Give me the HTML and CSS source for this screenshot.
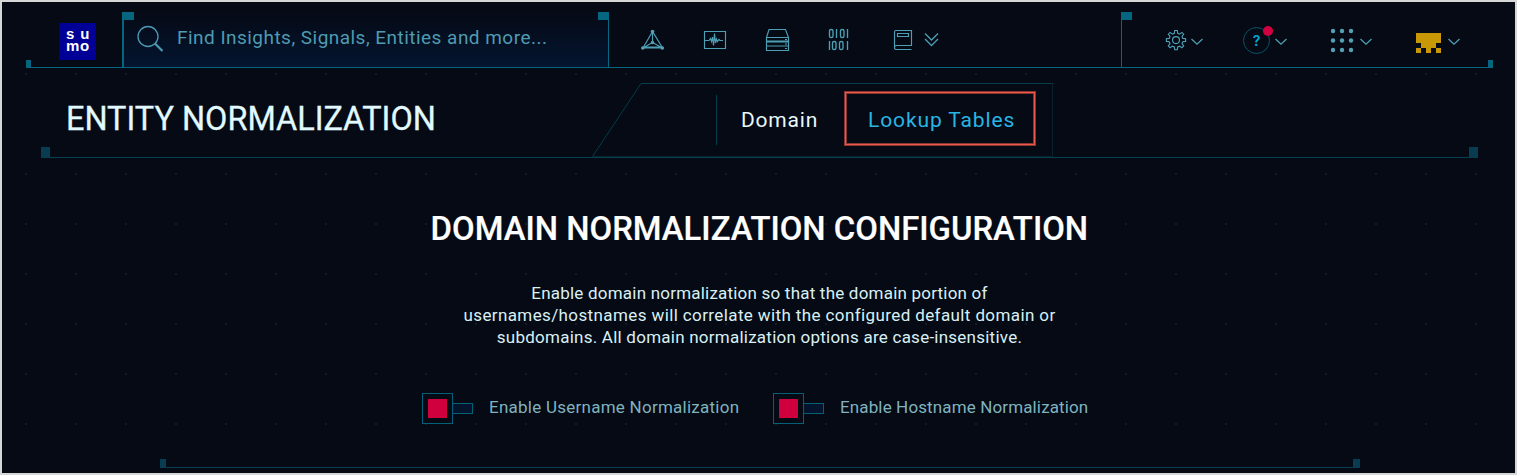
FILE: index.html
```html
<!DOCTYPE html>
<html lang="en">
<head>
<meta charset="utf-8">
<title>Entity Normalization</title>
<link rel="stylesheet" href="styles.css">
</head>
<body>
<div class="app">
  <header class="topbar">
    <div class="logo"><span class="logo-su">su</span><span class="logo-mo">mo</span></div>
    <div class="search">
      <svg class="search-icon" width="28" height="28" viewBox="0 0 28 28"><circle cx="11" cy="11.500" r="10" /><path d="M18 18.500L25.500 26" stroke-width="2.200" /></svg>
      <span class="search-text">Find Insights, Signals, Entities and more...</span>
    </div>
    <nav class="nav">
      <svg class="icon i-graph" width="26" height="26" viewBox="0 0 26 26"><path d="M12.500 4.500L3 21H22.500ZM12.500 4.500V15.500L3 21M12.500 15.500L22.500 21M3 20H22.500" /><g class="solid"><circle cx="12.500" cy="4.500" r="1.800"/><circle cx="12.500" cy="15.500" r="1.700"/><circle cx="2.800" cy="21" r="1.800"/><circle cx="22.300" cy="21" r="1.800"/></g></svg>
      <svg class="icon i-pulse" width="24" height="26" viewBox="0 0 24 26"><path d="M1.500 4.500H22.500V21.500H1.500ZM2 13.500H6L7.500 11.500L8.500 14.500L9.500 10L10.500 18.500L11.500 6.500L12.500 16L13.500 12L14.500 14.500L16 12.500L17 13.500H20" /></svg>
      <svg class="icon i-server" width="25" height="26" viewBox="0 0 25 26"><path d="M1.500 10.500L4 2.500H20.500L23.500 10.500V23.500H1.500ZM1.500 10.500H23.500M1.500 15H23.500M1.500 19H23.500M1.500 14H23.500M20 12.500H22M20 17H22M20 21.500H22" /></svg>
      <svg class="icon i-binary" width="22" height="26" viewBox="0 0 22 26"><rect x="1.500" y="2.500" width="3.500" height="8" rx="1.600"/><rect x="12.500" y="2.500" width="3.500" height="8" rx="1.600"/><path d="M8.500 2V11M19.500 2V11M1.500 14V23M19.500 14V23"/><rect x="4.500" y="14.500" width="3.500" height="8" rx="1.600"/><rect x="11.500" y="14.500" width="3.500" height="8" rx="1.600"/></svg>
      <svg class="icon i-book" width="20" height="26" viewBox="0 0 20 26"><path d="M18.500 22.500H3Q1.500 22.500 1.500 20.500V5Q1.500 3.500 3 3.500H18.500V18.500H3.500Q1.500 18.500 1.500 20.500M4.500 6.500H15.500V9.500H4.500Z" /></svg>
      <svg class="icon i-more" width="15" height="26" viewBox="0 0 15 26"><path d="M1 6.500L7.500 13L14 6.500M1 12L7.500 18.500L14 12" /></svg>
    </nav>
    <div class="tools">
      <svg class="icon i-gear" width="24" height="26" viewBox="0 0 24 26"><path d="M10.300 6.300L10.700 3.500H13.300L13.700 6.300L15.600 7.100L17.900 5.400L19.700 7.200L18 9.500L18.800 11.400L21.600 11.800V14.400L18.800 14.800L18 16.700L19.700 19L17.900 20.800L15.600 19.100L13.700 19.900L13.300 22.700H10.700L10.300 19.900L8.400 19.100L6.100 20.800L4.300 19L6 16.700L5.200 14.800L2.400 14.400V11.800L5.200 11.400L6 9.500L4.300 7.200L6.100 5.400L8.400 7.100Z" /><circle cx="12" cy="13.100" r="3.500"/></svg>
      <svg class="icon chev c1" width="14" height="26" viewBox="0 0 14 26"><path d="M1.500 12L7 17.200L12.500 12" /></svg>
      <div class="help">?<span class="badge"></span></div>
      <svg class="icon chev c2" width="14" height="26" viewBox="0 0 14 26"><path d="M1.500 12L7 17.200L12.500 12" /></svg>
      <svg class="icon i-grid" width="26" height="26" viewBox="0 0 26 26"><g class="solid"><circle cx="4" cy="4" r="2.200"/><circle cx="13" cy="4" r="2.200"/><circle cx="22" cy="4" r="2.200"/><circle cx="4" cy="13.500" r="2.200"/><circle cx="13" cy="13.500" r="2.200"/><circle cx="22" cy="13.500" r="2.200"/><circle cx="4" cy="23" r="2.200"/><circle cx="13" cy="23" r="2.200"/><circle cx="22" cy="23" r="2.200"/></g></svg>
      <svg class="icon chev c3" width="14" height="26" viewBox="0 0 14 26"><path d="M1.500 12L7 17.200L12.500 12" /></svg>
      <svg class="avatar" width="25" height="26" viewBox="0 0 25 26"><path d="M0 6H25V16H20V21H25V26H20V21H15V26H10V21H5V26H0V21H5V16H0Z" /></svg>
      <svg class="icon chev c4" width="14" height="26" viewBox="0 0 14 26"><path d="M1.500 12L7 17.200L12.500 12" /></svg>
    </div>
  </header>

  <section class="titlebar">
    <h1 class="page-title"><span>ENTITY NORMALIZATION</span></h1>
    <div class="tabs">
      <svg class="tabs-frame" width="461" height="75" viewBox="0 0 461 75"><path class="edge" d="M0.500 73.500L49 0.500H461"/><path class="edge-dim" d="M460.500 1V73.500H0"/></svg>
      <a class="tab">Domain</a>
      <a class="tab tab-active">Lookup Tables</a>
    </div>
  </section>

  <main class="config">
    <h2 class="config-title">DOMAIN NORMALIZATION CONFIGURATION</h2>
    <p class="config-text"><span class="l1">Enable domain normalization so that the domain portion of</span><br><span class="l2">usernames/hostnames will correlate with the configured default domain or</span><br><span class="l3">subdomains. All domain normalization options are case-insensitive.</span></p>
    <div class="toggles">
      <label class="toggle"><span class="box"><i></i></span><span class="stub"></span><span class="label label-user">Enable Username Normalization</span></label>
      <label class="toggle"><span class="box"><i></i></span><span class="stub"></span><span class="label label-host">Enable Hostname Normalization</span></label>
    </div>
    <div class="panel-edge"></div>
  </main>
</div>
</body>
</html>
```
FILE: styles.css
```css
* { box-sizing: border-box; }
body { margin: 0; font-family: Roboto, "Liberation Sans", sans-serif; background: #050a14; }
.app {
  height: 475px;
  overflow: hidden;
  border: 2px solid #d5d6d6;
  background: conic-gradient(from 270deg at 2px 2px, #141b26 90deg, transparent 0) 23px 21px / 50px 50px #050a15;
}
.topbar {
  position: relative;
  display: flex;
  height: 66px;
  padding: 10px 24px 0 33px;
  margin: 0 22px 0 24px;
  background: #050a15;
  border-bottom: 1px solid #04667f;
  box-shadow: -24px 0 #050a15, 22px 0 #050a15;
}
.topbar::before, .topbar::after {
  content: "";
  position: absolute;
  bottom: -1px;
  width: 5px;
  height: 8px;
  background: #04667f;
}
.topbar::before { left: 0; }
.topbar::after { right: 0; }
.logo {
  display: flex;
  flex-direction: column;
  width: 37px;
  height: 37px;
  margin: 11px 26px 0 0;
  padding: 5px 0 0 7px;
  background: #000096;
  color: #fff;
  font: bold 15px/11.500px "Liberation Sans", sans-serif;
}
.logo-su { letter-spacing: 5.800px; }
.logo-mo { letter-spacing: 0.600px; }
.search {
  position: relative;
  display: flex;
  width: 487px;
  padding: 13px 0 0 13px;
  border-left: 2px solid #04667f;
  border-right: 1px solid #04667f;
  background: linear-gradient(#050a15, #041530);
}
.search::before, .search::after, .tools::before {
  content: "";
  position: absolute;
  top: 0;
  width: 11px;
  height: 8px;
  background: #04667f;
}
.search::before { left: -2px; width: 12px; }
.search::after { right: -1px; }
.search-icon { fill: none; stroke: #4b9ab1; stroke-width: 1.300; }
.search-text {
  margin-left: 12px;
  color: #4f9bb1;
  font-size: 19px;
  line-height: 26px;
  letter-spacing: 0.470px;
  white-space: nowrap;
}
.icon { flex: none; fill: none; stroke: #4d9fb4; stroke-width: 1.150; }
.icon .solid { fill: #55a0b5; stroke: none; }
.chev, .i-more { stroke-width: 1.300; }
.nav { display: flex; width: 512px; padding: 15px 0 0 31px; }
.i-pulse { margin-left: 37px; }
.i-server { margin-left: 38px; }
.i-binary { margin-left: 38px; stroke-width: 1.350; }
.i-book { margin-left: 43px; }
.i-more { margin-left: 11px; }
.tools {
  position: relative;
  display: flex;
  flex: 1;
  padding: 15px 0 0 41.500px;
  border-left: 1px solid #04667f;
}
.tools::before { left: -1px; }
.c1 { margin-left: 2.500px; }
.help {
  position: relative;
  width: 27px;
  height: 27px;
  margin-left: 39px;
  border: 1px solid #0a5266;
  border-radius: 50%;
  color: #00a9d6;
  font: 600 14px/26px Inter, sans-serif;
  text-align: center;
}
.badge {
  position: absolute;
  top: -2px;
  right: -4px;
  width: 10px;
  height: 10px;
  border-radius: 50%;
  background: #d20040;
}
.c2 { margin-left: 4px; }
.i-grid { margin-left: 41px; }
.c3 { margin-left: 4px; }
.avatar { flex: none; margin-left: 43px; fill: #c99806; }
.c4 { margin-left: 6px; }

.titlebar {
  position: relative;
  display: flex;
  height: 80px;
  margin: 10px 37px 0 39px;
  background: #050a15;
  border-bottom: 1px solid #063f50;
  box-shadow: -39px 0 #050a15, 37px 0 #050a15;
}
.titlebar::before, .titlebar::after {
  content: "";
  position: absolute;
  bottom: -1px;
  width: 9px;
  height: 11px;
  background: #083c50;
}
.titlebar::before { left: 0; }
.titlebar::after { right: 0; }
.page-title {
  width: 551px;
  margin: 0;
  padding: 20px 0 0 25px;
  color: #e1f9ff;
  font-weight: 400;
  font-size: 34px;
  line-height: 40px;
  white-space: nowrap;
}
.page-title span {
  display: inline-block;
  transform: scaleX(0.954);
  transform-origin: left;
  -webkit-text-stroke: 0.300px #e1f9ff;
}
.tabs { position: relative; display: flex; margin-top: 5px; padding-left: 124px; }
.tabs-frame { position: absolute; left: 0; top: 0; fill: none; stroke-width: 1; }
.edge { stroke: #063c4c; }
.edge-dim { stroke: #05222e; }
.tab {
  width: 127px;
  height: 50px;
  margin-top: 12px;
  padding-left: 24px;
  border-left: 1px solid #063c4c;
  color: #e9f8fa;
  font-size: 21px;
  line-height: 51px;
  letter-spacing: 0.800px;
  white-space: nowrap;
}
.tab-active {
  width: 190px;
  height: 53px;
  margin: 9px 0 0 2px;
  padding-left: 22px;
  border: 1px solid #ee5848;
  outline: 1px solid #873631;
  box-shadow: inset 0 0 0 1px #873631;
  color: #29b5e3;
  line-height: 55px;
  letter-spacing: 0.880px;
}
.config { display: flex; flex-direction: column; align-items: center; padding-left: 2px; }
.config-title {
  margin: 50px 0 0;
  color: #fff;
  font-weight: 500;
  font-size: 34px;
  line-height: 40px;
  white-space: nowrap;
  transform: scaleX(0.966);
  -webkit-text-stroke: 0.200px #fff;
}
.config-text {
  margin: 34px 0 0;
  color: #d9f0f4;
  font-size: 17px;
  line-height: 22px;
  text-align: center;
  white-space: nowrap;
}
.l1 { letter-spacing: 0.210px; }
.l2 { letter-spacing: 0.390px; }
.l3 { letter-spacing: 0.240px; }
.toggles { display: flex; width: 675px; margin: 45px 0 0; }
.toggle { display: flex; width: 351px; flex: none; align-items: center; }
.box { width: 31px; height: 31px; padding: 5px; border: 1px solid #046079; }
.box i { display: block; width: 19px; height: 19px; background: #d0003f; }
.stub { width: 20px; height: 11px; border: 1px solid #046079; border-left: 0; background: #04142c; }
.label {
  margin: -2px 0 0 16px;
  color: #80b3bf;
  font-size: 17px;
  line-height: 27px;
  white-space: nowrap;
}
.label-user { letter-spacing: 0.250px; }
.label-host { letter-spacing: 0.130px; }
.panel-edge {
  position: relative;
  width: 1200px;
  height: 9px;
  margin-top: 35px;
  border: solid #083c50;
  border-width: 0 7px 0 6px;
  box-shadow: inset 0 -1px #083c50;
}
```
